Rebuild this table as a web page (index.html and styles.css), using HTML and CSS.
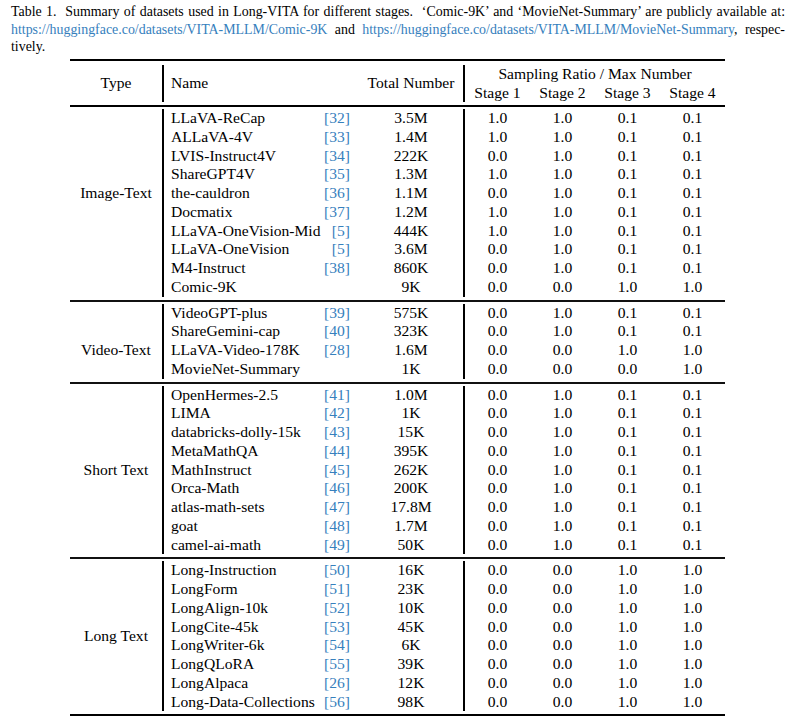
FILE: index.html
```html
<!DOCTYPE html>
<html>
<head>
<meta charset="utf-8">
<link rel="stylesheet" href="styles.css">
</head>
<body>
<div class="caption">
  <span class="cline">Table 1.&nbsp; Summary of datasets used in Long-VITA for different stages.&nbsp; ‘Comic-9K’ and ‘MovieNet-Summary’ are publicly available at:</span>
  <span class="cline"><a class="link">https://huggingface.co/datasets/VITA-MLLM/Comic-9K</a> and <a class="link">https://huggingface.co/datasets/VITA-MLLM/MovieNet-Summary</a>, respec-</span>
  <span class="lastline">tively.</span>
</div>

<div class="table">
  <div class="head">
    <div class="type">Type</div>
    <div class="rows">
      <div class="row headrow">
        <div class="hname">Name</div>
        <div class="total">Total Number</div>
        <div class="stages hstages">
          <div class="span4">Sampling Ratio / Max Number</div>
          <div>Stage 1</div><div>Stage 2</div><div>Stage 3</div><div>Stage 4</div>
        </div>
      </div>
    </div>
  </div>

  <div class="sec">
    <div class="type up">Image-Text</div>
    <div class="rows">
      <div class="row"><div class="name">LLaVA-ReCap</div><div class="ref">[32]</div><div class="total">3.5M</div><div class="stages"><div>1.0</div><div>1.0</div><div>0.1</div><div>0.1</div></div></div>
      <div class="row"><div class="name">ALLaVA-4V</div><div class="ref">[33]</div><div class="total">1.4M</div><div class="stages"><div>1.0</div><div>1.0</div><div>0.1</div><div>0.1</div></div></div>
      <div class="row"><div class="name">LVIS-Instruct4V</div><div class="ref">[34]</div><div class="total">222K</div><div class="stages"><div>0.0</div><div>1.0</div><div>0.1</div><div>0.1</div></div></div>
      <div class="row"><div class="name">ShareGPT4V</div><div class="ref">[35]</div><div class="total">1.3M</div><div class="stages"><div>1.0</div><div>1.0</div><div>0.1</div><div>0.1</div></div></div>
      <div class="row"><div class="name">the-cauldron</div><div class="ref">[36]</div><div class="total">1.1M</div><div class="stages"><div>0.0</div><div>1.0</div><div>0.1</div><div>0.1</div></div></div>
      <div class="row"><div class="name">Docmatix</div><div class="ref">[37]</div><div class="total">1.2M</div><div class="stages"><div>1.0</div><div>1.0</div><div>0.1</div><div>0.1</div></div></div>
      <div class="row"><div class="name">LLaVA-OneVision-Mid</div><div class="ref">[5]</div><div class="total">444K</div><div class="stages"><div>1.0</div><div>1.0</div><div>0.1</div><div>0.1</div></div></div>
      <div class="row"><div class="name">LLaVA-OneVision</div><div class="ref">[5]</div><div class="total">3.6M</div><div class="stages"><div>0.0</div><div>1.0</div><div>0.1</div><div>0.1</div></div></div>
      <div class="row"><div class="name">M4-Instruct</div><div class="ref">[38]</div><div class="total">860K</div><div class="stages"><div>0.0</div><div>1.0</div><div>0.1</div><div>0.1</div></div></div>
      <div class="row"><div class="name">Comic-9K</div><div class="ref"></div><div class="total">9K</div><div class="stages"><div>0.0</div><div>0.0</div><div>1.0</div><div>1.0</div></div></div>
    </div>
  </div>

  <div class="sec">
    <div class="type down">Video-Text</div>
    <div class="rows">
      <div class="row"><div class="name">VideoGPT-plus</div><div class="ref">[39]</div><div class="total">575K</div><div class="stages"><div>0.0</div><div>1.0</div><div>0.1</div><div>0.1</div></div></div>
      <div class="row"><div class="name">ShareGemini-cap</div><div class="ref">[40]</div><div class="total">323K</div><div class="stages"><div>0.0</div><div>1.0</div><div>0.1</div><div>0.1</div></div></div>
      <div class="row"><div class="name">LLaVA-Video-178K</div><div class="ref">[28]</div><div class="total">1.6M</div><div class="stages"><div>0.0</div><div>0.0</div><div>1.0</div><div>1.0</div></div></div>
      <div class="row"><div class="name">MovieNet-Summary</div><div class="ref"></div><div class="total">1K</div><div class="stages"><div>0.0</div><div>0.0</div><div>0.0</div><div>1.0</div></div></div>
    </div>
  </div>

  <div class="sec">
    <div class="type">Short Text</div>
    <div class="rows">
      <div class="row"><div class="name">OpenHermes-2.5</div><div class="ref">[41]</div><div class="total">1.0M</div><div class="stages"><div>0.0</div><div>1.0</div><div>0.1</div><div>0.1</div></div></div>
      <div class="row"><div class="name">LIMA</div><div class="ref">[42]</div><div class="total">1K</div><div class="stages"><div>0.0</div><div>1.0</div><div>0.1</div><div>0.1</div></div></div>
      <div class="row"><div class="name">databricks-dolly-15k</div><div class="ref">[43]</div><div class="total">15K</div><div class="stages"><div>0.0</div><div>1.0</div><div>0.1</div><div>0.1</div></div></div>
      <div class="row"><div class="name">MetaMathQA</div><div class="ref">[44]</div><div class="total">395K</div><div class="stages"><div>0.0</div><div>1.0</div><div>0.1</div><div>0.1</div></div></div>
      <div class="row"><div class="name">MathInstruct</div><div class="ref">[45]</div><div class="total">262K</div><div class="stages"><div>0.0</div><div>1.0</div><div>0.1</div><div>0.1</div></div></div>
      <div class="row"><div class="name">Orca-Math</div><div class="ref">[46]</div><div class="total">200K</div><div class="stages"><div>0.0</div><div>1.0</div><div>0.1</div><div>0.1</div></div></div>
      <div class="row"><div class="name">atlas-math-sets</div><div class="ref">[47]</div><div class="total">17.8M</div><div class="stages"><div>0.0</div><div>1.0</div><div>0.1</div><div>0.1</div></div></div>
      <div class="row"><div class="name">goat</div><div class="ref">[48]</div><div class="total">1.7M</div><div class="stages"><div>0.0</div><div>1.0</div><div>0.1</div><div>0.1</div></div></div>
      <div class="row"><div class="name">camel-ai-math</div><div class="ref">[49]</div><div class="total">50K</div><div class="stages"><div>0.0</div><div>1.0</div><div>0.1</div><div>0.1</div></div></div>
    </div>
  </div>

  <div class="sec">
    <div class="type">Long Text</div>
    <div class="rows">
      <div class="row"><div class="name">Long-Instruction</div><div class="ref">[50]</div><div class="total">16K</div><div class="stages"><div>0.0</div><div>0.0</div><div>1.0</div><div>1.0</div></div></div>
      <div class="row"><div class="name">LongForm</div><div class="ref">[51]</div><div class="total">23K</div><div class="stages"><div>0.0</div><div>0.0</div><div>1.0</div><div>1.0</div></div></div>
      <div class="row"><div class="name">LongAlign-10k</div><div class="ref">[52]</div><div class="total">10K</div><div class="stages"><div>0.0</div><div>0.0</div><div>1.0</div><div>1.0</div></div></div>
      <div class="row"><div class="name">LongCite-45k</div><div class="ref">[53]</div><div class="total">45K</div><div class="stages"><div>0.0</div><div>0.0</div><div>1.0</div><div>1.0</div></div></div>
      <div class="row"><div class="name">LongWriter-6k</div><div class="ref">[54]</div><div class="total">6K</div><div class="stages"><div>0.0</div><div>0.0</div><div>1.0</div><div>1.0</div></div></div>
      <div class="row"><div class="name">LongQLoRA</div><div class="ref">[55]</div><div class="total">39K</div><div class="stages"><div>0.0</div><div>0.0</div><div>1.0</div><div>1.0</div></div></div>
      <div class="row"><div class="name">LongAlpaca</div><div class="ref">[26]</div><div class="total">12K</div><div class="stages"><div>0.0</div><div>0.0</div><div>1.0</div><div>1.0</div></div></div>
      <div class="row"><div class="name">Long-Data-Collections</div><div class="ref">[56]</div><div class="total">98K</div><div class="stages"><div>0.0</div><div>0.0</div><div>1.0</div><div>1.0</div></div></div>
    </div>
  </div>
</div>
</body>
</html>
```

FILE: styles.css
```css
html, body {
  margin: 0;
  padding: 0;
  background: #fff;
}

body {
  font-family: "Liberation Serif", "Times New Roman", serif;
  color: #000;
  width: 792px;
  height: 726px;
  overflow: hidden;
}

.caption {
  margin: 0 7px 0 11px;
  padding-top: 3px;
  font-size: 13.9px;
  line-height: 17.5px;
}

.cline {
  display: block;
  text-align: justify;
  text-align-last: justify;
  white-space: nowrap;
}

.lastline {
  display: block;
}

.link {
  color: #3680bd;
  text-decoration: none;
}

.table {
  margin: 3.5px 0 0 70px;
  width: 655px;
  border-top: 2px solid #000;
  border-bottom: 2px solid #000;
  font-size: 15.6px;
}

.head {
  display: flex;
  padding: 4px 0 3px;
  border-bottom: 2px solid #000;
  line-height: 18.5px;
}

.sec {
  display: flex;
  padding: 2px 0 3px;
  line-height: 18.75px;
}

.sec + .sec {
  border-top: 2px solid #111;
}

.type {
  width: 92px;
  flex: 0 0 92px;
  display: flex;
  align-items: center;
  justify-content: center;
}

.type.up {
  padding-bottom: 18.75px;
  box-sizing: border-box;
}

.type.down {
  padding-top: 18.75px;
  box-sizing: border-box;
}

.rows {
  flex: 1;
  border-left: 2px solid #000;
}

.row {
  display: grid;
  grid-template-columns: 156px 39px 104px 262px;
  white-space: nowrap;
}

.headrow {
  grid-template-columns: 195px 104px 262px;
  align-items: center;
}

.name, .hname {
  padding-left: 7px;
}

.ref {
  color: #3680bd;
  text-align: right;
  padding-right: 9px;
}

.total {
  text-align: center;
}

.stages {
  display: grid;
  grid-template-columns: repeat(4, 65px);
  border-left: 2px solid #000;
  text-align: center;
}

.span4 {
  grid-column: 1 / -1;
}
```
